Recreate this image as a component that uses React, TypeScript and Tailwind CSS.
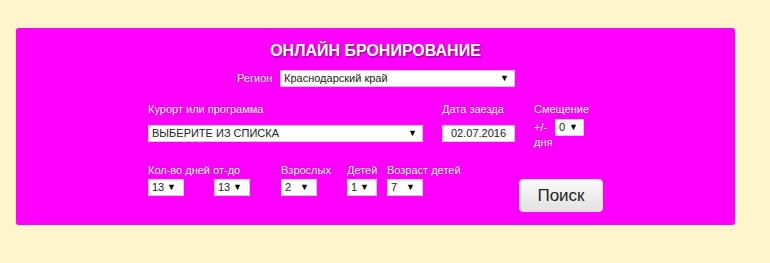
import React from "react";

// Fake select box, looks like an old-style native dropdown
function Select({
  value,
  width,
  arrowGap = "right-[7px]",
}: {
  value: string;
  width: string;
  arrowGap?: string;
}) {
  return (
    <div
      className={`relative h-[17px] ${width} bg-white border border-[#d9c6e6] text-[11px] leading-[15px] text-[#222] pl-[3px] font-['Liberation_Sans',Arial,sans-serif]`}
    >
      {value}
      <span className={`absolute ${arrowGap} top-0 text-[9px] leading-[15px] text-black`}>▼</span>
    </div>
  );
}

function Label({ children }: { children: React.ReactNode }) {
  return (
    <div className="text-[11px] leading-[13px] text-[#fff0ff] whitespace-nowrap [text-shadow:0_0_2px_rgba(110,0,110,0.8)]">
      {children}
    </div>
  );
}

export default function App() {
  return (
    <div className="w-[770px] h-[263px] bg-[#fdf5cc] pt-[28px] pl-[16px] font-['Liberation_Sans',Arial,sans-serif]">
      <div className="w-[719px] h-[197px] bg-[#ff00ff] rounded-[3px] pt-[14px] shadow-[0_0_1px_rgba(0,0,0,0.3)]">
        {/* Title */}
        <div className="text-center text-[16px] leading-[18px] font-bold text-white [text-shadow:1px_1px_2px_rgba(60,0,60,0.7)]">
          ОНЛАЙН БРОНИРОВАНИЕ
        </div>

        {/* Region */}
        <div className="flex items-center mt-[10px] pl-[221px]">
          <div className="w-[43px]">
            <Label>Регион</Label>
          </div>
          <Select value="Краснодарский край" width="w-[235px]" arrowGap="right-[5px]" />
        </div>

        {/* Resort, date, offset */}
        <div className="flex mt-[16px] pl-[132px]">
          <div className="w-[294px]">
            <Label>Курорт или программа</Label>
            <div className="mt-[9px]">
              <Select value="ВЫБЕРИТЕ ИЗ СПИСКА" width="w-[275px]" arrowGap="right-[5px]" />
            </div>
          </div>
          <div className="w-[92px]">
            <Label>Дата заезда</Label>
            <div className="mt-[9px] h-[17px] w-[73px] bg-white border border-[#d9c6e6] text-[11px] leading-[15px] text-[#222] text-center">
              02.07.2016
            </div>
          </div>
          <div>
            <Label>Смещение</Label>
            <div className="flex items-center mt-[3px] h-[16px]">
              <div className="w-[21px]">
                <Label>+/-</Label>
              </div>
              <Select value="0" width="w-[29px]" arrowGap="right-[5px]" />
            </div>
            <div className="mt-[1px]">
              <Label>дня</Label>
            </div>
          </div>
        </div>

        {/* Days, adults, children, button */}
        <div className="flex mt-[15px] pl-[132px]">
          <div className="w-[133px]">
            <Label>Кол-во дней от-до</Label>
            <div className="flex gap-[30px] mt-[2px]">
              <Select value="13" width="w-[36px]" />
              <Select value="13" width="w-[36px]" />
            </div>
          </div>
          <div className="w-[66px]">
            <Label>Взрослых</Label>
            <div className="mt-[2px]">
              <Select value="2" width="w-[36px]" />
            </div>
          </div>
          <div className="w-[40px]">
            <Label>Детей</Label>
            <div className="mt-[2px]">
              <Select value="1" width="w-[30px]" />
            </div>
          </div>
          <div className="w-[132px]">
            <Label>Возраст детей</Label>
            <div className="mt-[2px]">
              <Select value="7" width="w-[36px]" />
            </div>
          </div>
          <div className="pt-[15px]">
            <button className="w-[84px] h-[33px] rounded-[4px] border border-[#e6d3e6] bg-gradient-to-b from-[#fafafa] to-[#e2e2e2] text-[17px] text-[#222] font-['Liberation_Sans',Arial,sans-serif]">
              Поиск
            </button>
          </div>
        </div>
      </div>
    </div>
  );
}
